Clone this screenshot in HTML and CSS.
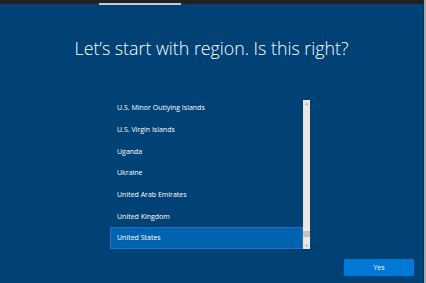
FILE: index.html
```html
<!DOCTYPE html>
<html lang="en">
<head>
    <meta charset="UTF-8">
    <meta name="viewport" content="width=device-width, initial-scale=1.0">
    <title>Region</title>
    <link rel="stylesheet" href="styles.css">
</head>
<body>
    <div class="screen">
        <div class="main">
            <div class="topbar">
                <div class="tab"></div>
            </div>
            <h1 class="title">Let’s start with region. Is this right?</h1>
            <div class="picker">
                <ul class="rows">
                    <li class="row">U.S. Minor Outlying Islands</li>
                    <li class="row">U.S. Virgin Islands</li>
                    <li class="row">Uganda</li>
                    <li class="row">Ukraine</li>
                    <li class="row">United Arab Emirates</li>
                    <li class="row">United Kingdom</li>
                    <li class="row selected">United States</li>
                </ul>
                <div class="scroll">
                    <span class="arrow">▲</span>
                    <span class="spacer"></span>
                    <span class="thumb"></span>
                    <span class="arrow">▼</span>
                </div>
            </div>
            <div class="actions">
                <button class="btn">Yes</button>
            </div>
        </div>
    </div>
</body>
</html>
```

FILE: styles.css
```css
body {
    margin: 0;
    background-color: #a9a9a9;
    font-family: "Open Sans", "Noto Sans", sans-serif;
    color: #fff;
}
.screen {
    display: flex;
    width: 426px;
    height: 283px;
}
.main {
    width: 423px;
    background-color: #004275;
    border-right: 1px solid #00335c;
    display: flex;
    flex-direction: column;
}
.topbar {
    height: 4px;
    background-color: #212121;
}
.tab {
    margin-left: 99px;
    margin-top: 3px;
    width: 82px;
    height: 2px;
    background-color: #c8ccd0;
}
.title {
    margin: 31px 0 0;
    font-size: 17.8px;
    line-height: 26px;
    font-weight: 300;
    text-align: center;
}
.picker {
    display: flex;
    margin: 36px 0 0 110px;
    width: 200px;
}
.rows {
    flex: 1;
    list-style: none;
    margin: 0;
    padding: 0;
}
.row {
    height: 21.7px;
    box-sizing: border-box;
    padding-left: 7px;
    display: flex;
    align-items: center;
    font-size: 7px;
}
.row.selected {
    background-color: #0063b1;
    border: 1px solid #1d72bb;
    padding-left: 6px;
}
.scroll {
    width: 7px;
    margin-top: 3px;
    background-color: #e8e8e8;
    display: flex;
    flex-direction: column;
    align-items: center;
}
.arrow {
    height: 7px;
    font-size: 4px;
    line-height: 7px;
    color: #a6a6a6;
}
.spacer {
    flex: 1;
}
.thumb {
    width: 7px;
    height: 6px;
    margin-bottom: 5px;
    background-color: #c2c2c2;
}
.actions {
    display: flex;
    justify-content: flex-end;
    margin: 10px 9px 0 0;
}
.btn {
    width: 70px;
    height: 17px;
    padding: 0;
    border: none;
    background-color: #0078d7;
    color: #fff;
    font-family: "Open Sans", "Noto Sans", sans-serif;
    font-size: 7px;
}
```
